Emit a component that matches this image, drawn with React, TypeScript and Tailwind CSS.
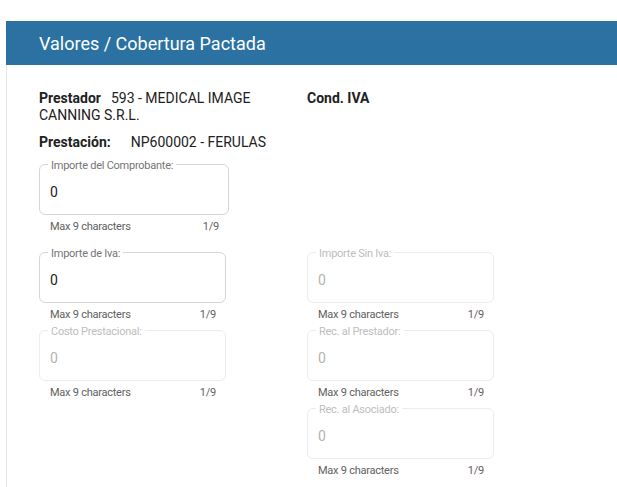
import React from "react";

type FieldProps = {
    label: string;
    value?: string;
    disabled?: boolean;
    width?: string;
};

function Field({ label, value = "0", disabled = false, width = "w-[187px]" }: FieldProps) {
    return (
        <div className={width}>
            <div
                className={`relative h-[51px] rounded-[6px] border ${
                    disabled ? "border-[#ececec]" : "border-[#d6d6d6]"
                }`}
            >
                <span
                    className={`absolute -top-[6px] left-[8px] bg-white px-[3px] text-[11px] leading-[14px] tracking-[-0.25px] ${
                        disabled ? "text-[#bdbdbd]" : "text-[#757575]"
                    }`}
                >
                    {label}
                </span>
                <div
                    className={`pl-[10px] pt-[19px] text-[14px] leading-[17px] ${
                        disabled ? "text-[#b3b3b3]" : "text-[#212121]"
                    }`}
                >
                    {value}
                </div>
            </div>
            <div className="mt-[5px] flex justify-between pl-[11px] pr-[10px] text-[11px] leading-[14px] tracking-[-0.25px] text-[#616161]">
                <span>Max 9 characters</span>
                <span>1/9</span>
            </div>
        </div>
    );
}

export default function App() {
    return (
        <div className="min-h-[487px] bg-white pt-[21px] pl-[6px] font-['Roboto',sans-serif]">
            <div className="flex h-[44px] items-center bg-[#2b72a2] pl-[33px]">
                <h1 className="text-[18px] font-normal text-white">Valores / Cobertura Pactada</h1>
            </div>

            <div className="min-h-[422px] border-l border-[#e6e6e6] pl-[32px] pt-[25px] text-[14px] leading-[17px] text-[#212121]">
                {/* Datos del prestador */}
                <div className="grid grid-cols-[268px_268px]">
                    <p className="pr-[20px]">
                        <span className="mr-[10px] font-bold">Prestador</span>
                        593 - MEDICAL IMAGE CANNING S.R.L.
                    </p>
                    <p className="font-bold">Cond. IVA</p>
                </div>
                <p className="mt-[10px]">
                    <span className="mr-[20px] font-bold">Prestación:</span>
                    <span>NP600002 - FERULAS</span>
                </p>

                {/* Importes */}
                <div className="mt-[13px]">
                    <Field label="Importe del Comprobante:" width="w-[190px]" />
                </div>

                <div className="mt-[18px] grid grid-cols-[268px_268px]">
                    <div className="flex flex-col gap-[8px]">
                        <Field label="Importe de Iva:" />
                        <Field label="Costo Prestacional:" disabled />
                    </div>
                    <div className="flex flex-col gap-[8px]">
                        <Field label="Importe Sin Iva:" disabled />
                        <Field label="Rec. al Prestador:" disabled />
                        <Field label="Rec. al Asociado:" disabled />
                    </div>
                </div>
            </div>
        </div>
    );
}
